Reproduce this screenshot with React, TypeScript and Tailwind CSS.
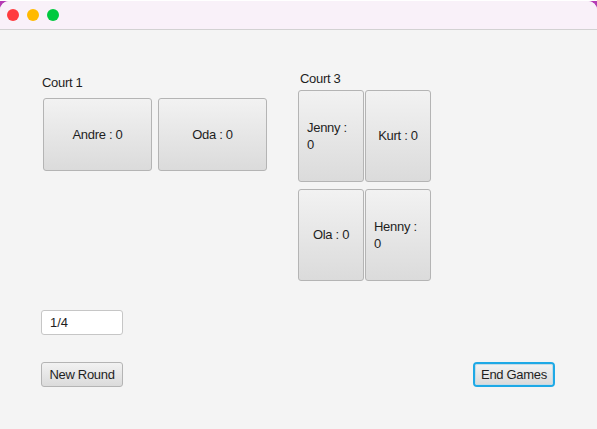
const font = 'font-["Liberation_Sans",Arial,sans-serif]';

const btn =
  'border border-[#b4b4b4] rounded-[3px] bg-gradient-to-b from-[#f2f2f2] to-[#dbdbdb] text-[13px] tracking-[-0.3px] text-[#1e1e1e]';

function PlayerButton({ label, wide, wrap }: { label: string; wide?: boolean; wrap?: boolean }) {
  return (
    <div
      className={`${btn} flex items-center ${wrap ? 'justify-start px-[8px]' : 'justify-center'} ${
        wide ? 'w-[109px] h-[73px]' : 'w-[66px] h-[92px]'
      }`}
    >
      <span className={wrap ? 'text-left leading-[17px] w-[45px]' : 'leading-[16px]'}>{label}</span>
    </div>
  );
}

export default function App() {
  return (
    <div className={`w-[597px] h-[429px] bg-[#b53cb5] ${font}`}>
      <div className="h-full mt-[1px] rounded-t-[9px] overflow-hidden bg-[#f4f4f4] flex flex-col">
        {/* title bar */}
        <div className="h-[29px] bg-[#f9f1f9] border-b border-[#d2d2d2] flex items-center gap-[8px] pl-[7px] shrink-0">
          <span className="w-[12px] h-[12px] rounded-full bg-[#ff3b3f]" />
          <span className="w-[12px] h-[12px] rounded-full bg-[#ffba00]" />
          <span className="w-[12px] h-[12px] rounded-full bg-[#00c93f]" />
        </div>

        <div className="flex flex-col pl-[41px] pr-[42px]">
          <div className="flex items-start pt-[41px]">
            <div className="flex flex-col mt-[4px] w-[257px]">
              <span className="text-[13px] tracking-[-0.3px] leading-[16px] text-[#1e1e1e] pl-[1px]">Court 1</span>
              <div className="flex gap-[6px] mt-[7px] pl-[2px]">
                <PlayerButton label="Andre : 0" wide />
                <PlayerButton label="Oda : 0" wide />
              </div>
            </div>
            <div className="flex flex-col">
              <span className="text-[13px] tracking-[-0.3px] leading-[16px] text-[#1e1e1e] pl-[2px]">Court 3</span>
              <div className="grid grid-cols-[66px_66px] gap-x-[1px] gap-y-[7px] mt-[3px]">
                <PlayerButton label="Jenny : 0" wrap />
                <PlayerButton label="Kurt : 0" />
                <PlayerButton label="Ola : 0" />
                <PlayerButton label="Henny : 0" wrap />
              </div>
            </div>
          </div>

          <div className="mt-[29px] w-[82px] h-[25px] bg-white border border-[#c6c6c6] rounded-[3px] flex items-center pl-[8px] text-[13px] text-[#1e1e1e]">
            1/4
          </div>

          <div className="flex justify-between items-center mt-[27px]">
            <div className={`${btn} w-[82px] h-[25px] flex items-center justify-center`}>New Round</div>
            <div className="rounded-[4px] border-[2px] border-[#1ea9e6]">
              <div className="w-[78px] h-[21px] rounded-[2px] border border-[#c4dbe6] bg-gradient-to-b from-[#f2f2f2] to-[#dbdbdb] text-[13px] tracking-[-0.3px] text-[#1e1e1e] flex items-center justify-center">
                End Games
              </div>
            </div>
          </div>
        </div>
      </div>
    </div>
  );
}
